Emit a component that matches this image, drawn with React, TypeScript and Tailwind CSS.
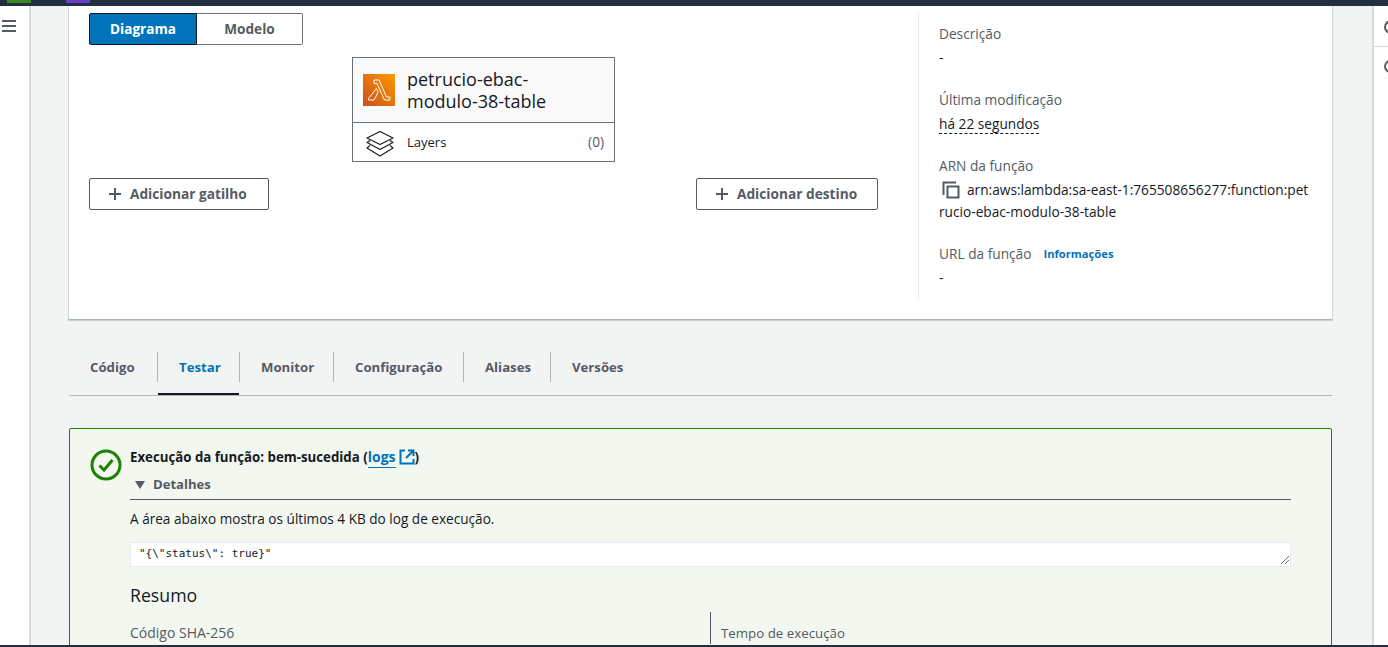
import React from "react";

const font = "font-['Open_Sans','Noto_Sans',sans-serif]";

const PlusIcon = () => (
  <svg width="16" height="16" viewBox="0 0 16 16" className="text-[#545b64]">
    <path d="M2 8h12M8 2v12" stroke="currentColor" strokeWidth="2" fill="none" />
  </svg>
);

const LambdaIcon = () => (
  <svg width="32" height="32" viewBox="0 0 32 32" className="shrink-0">
    <defs>
      <linearGradient id="lambdaBg" x1="0" y1="1" x2="1" y2="0">
        <stop offset="0" stopColor="#c8511b" />
        <stop offset="1" stopColor="#ff9900" />
      </linearGradient>
    </defs>
    <rect width="32" height="32" fill="url(#lambdaBg)" />
    <path
      d="M11 6h5l7.5 17H27v3h-5.5L14 9.5h-3zM13.5 14.5l1.7 3.6L11 26H5.5v-1.5z"
      fill="none"
      stroke="#fff"
      strokeWidth="1"
      strokeLinejoin="round"
    />
  </svg>
);

const LayersIcon = () => (
  <svg width="30" height="26" viewBox="0 0 30 26" className="mt-[3px] shrink-0 text-[#16191f]">
    <g fill="none" stroke="currentColor" strokeWidth="1.1" strokeLinejoin="round">
      <path d="M15 .5 28 7 15 13.5 2 7z" />
      <path d="M5 9.5 2 11.5 15 18.5 28 11.5 25 9.5" />
      <path d="M5 14.5 2 17 15 25 28 17 25 14.5" />
    </g>
  </svg>
);

const CopyIcon = () => (
  <svg width="18" height="18" viewBox="0 0 18 18" className="shrink-0 text-[#545b64]">
    <path
      d="M1.5 14V1.5H14M5.5 5.5H16.5V16.5H5.5z"
      fill="none"
      stroke="currentColor"
      strokeWidth="2"
    />
  </svg>
);

const Field = ({
  label,
  info,
  children,
}: {
  label: string;
  info?: boolean;
  children: React.ReactNode;
}) => (
  <div className="mb-[20px] text-[13.7px] leading-[22px]">
    <div className="mb-[2px] flex items-center gap-3 text-[#545b64]">
      {label}
      {info && (
        <span className="text-[11.2px] font-bold text-[#0073bb]">Informações</span>
      )}
    </div>
    <div className="text-[#16191f]">{children}</div>
  </div>
);

const tabs = [
  { name: "Código", width: "w-[88px]" },
  { name: "Testar", width: "w-[82px]" },
  { name: "Monitor", width: "w-[94px]" },
  { name: "Configuração", width: "w-[130px]" },
  { name: "Aliases", width: "w-[87px]" },
  { name: "Versões", width: "w-[94px]" },
];

export default function App() {
  return (
    <div className={`${font} flex h-[647px] w-[1388px] flex-col overflow-hidden bg-[#f2f3f3] text-[13.7px] text-[#16191f]`}>
      {/* faixa superior */}
      <div className="flex h-[6px] shrink-0 bg-[#232f3e]">
        <div className="ml-[7px] h-[3px] w-6 bg-[#3f8624]" />
        <div className="ml-[35px] h-[3px] w-6 bg-[#693cc5]" />
      </div>

      <div className="flex min-h-0 flex-1">
        <div className="w-[31px] shrink-0 border-r-2 border-[#d5dbdb] bg-white pl-[2px] pt-[14px]">
          <svg width="14" height="12" viewBox="0 0 14 12" className="text-[#545b64]">
            <path d="M0 1h14M0 6h14M0 11h14" stroke="currentColor" strokeWidth="2" />
          </svg>
        </div>

        <main className="w-[1341px] shrink-0 pl-[37px]">
          {/* painel da função */}
          <section className="flex h-[314px] w-[1265px] border-x border-b border-x-[#d5dbdb] border-b-[#aab7b8] bg-white shadow-[0_1px_1px_0_rgba(0,28,36,0.15)]">
            <div className="w-[849px] shrink-0 pl-5 pr-10 pt-[7px]">
              <div className="flex h-8 w-[214px] text-[13.6px] font-bold leading-none">
                <div className="flex w-[108px] items-center justify-center rounded-l-[2px] border border-[#16191f] bg-[#0073bb] text-white">
                  Diagrama
                </div>
                <div className="flex flex-1 items-center justify-center rounded-r-[2px] border border-l-0 border-[#687078] text-[#545b64]">
                  Modelo
                </div>
              </div>

              <div className="ml-[263px] mt-3 w-[263px] border border-[#687078]">
                <div className="flex h-[65px] items-center gap-3 border-b border-[#687078] bg-[#fafafa] px-[10px]">
                  <LambdaIcon />
                  <div className="text-[18px] leading-[22px]">
                    petrucio-ebac-
                    <br />
                    modulo-38-table
                  </div>
                </div>
                <div className="flex h-[38px] items-center pl-3 pr-[10px] text-[13px]">
                  <LayersIcon />
                  <span className="ml-[12px] flex-1 pt-[1px]">Layers</span>
                  <span className="pt-[1px] text-[13.7px] text-[#545b64]">(0)</span>
                </div>
              </div>

              <div className="mt-4 flex justify-between text-[13.7px]">
                <button className="flex h-8 w-[180px] items-center gap-[7px] rounded-[2px] border border-[#545b64] pl-[17px] font-bold text-[#545b64]">
                  <PlusIcon />
                  Adicionar gatilho
                </button>
                <button className="flex h-8 w-[182px] items-center gap-[7px] rounded-[2px] border border-[#545b64] pl-[17px] font-bold text-[#545b64]">
                  <PlusIcon />
                  Adicionar destino
                </button>
              </div>
            </div>

            <div className="mt-[7px] h-[285px] flex-1 border-l border-[#eaeded] pl-5 pr-5 pt-[10px]">
              <Field label="Descrição">-</Field>
              <Field label="Última modificação">
                <span className="border-b border-dashed border-[#16191f]">há 22 segundos</span>
              </Field>
              <Field label="ARN da função">
                <div className="break-all">
                  <span className="mr-[7px] ml-[3px] inline-block align-[-4px]">
                    <CopyIcon />
                  </span>
                  arn:aws:lambda:sa-east-1:765508656277:function:petrucio-ebac-modulo-38-table
                </div>
              </Field>
              <Field label="URL da função" info>
                -
              </Field>
            </div>
          </section>

          {/* abas */}
          <nav className="ml-[1px] mt-[32px] flex h-[44px] w-[1263px] items-start border-b border-[#aab7b8] text-[13.2px] font-bold text-[#545b64]">
            {tabs.map((tab, i) => (
              <div
                key={tab.name}
                className={`relative flex h-[30px] items-center pl-[21px] pt-[1px] ${tab.width} ${
                  i > 0 ? "border-l border-[#aab7b8]" : ""
                } ${i === 1 ? "text-[#0073bb]" : ""}`}
              >
                {tab.name}
                {i === 1 && (
                  <div className="absolute bottom-[-13px] left-0 right-0 h-[2px] bg-[#16191f]" />
                )}
              </div>
            ))}
          </nav>

          {/* resultado */}
          <section className="ml-[1px] mt-8 h-[300px] w-[1263px] rounded-[2px] border border-[#1d8102] bg-[#f2f8f0] pl-[20px] pr-10 pt-[18px]">
            <div className="flex">
              <svg width="32" height="32" viewBox="0 0 32 32" className="mt-[2px] shrink-0 text-[#1d8102]">
                <circle cx="16" cy="16" r="14" fill="none" stroke="currentColor" strokeWidth="3" />
                <path d="M9.5 16.5 14 21l8.5-10" fill="none" stroke="currentColor" strokeWidth="3" />
              </svg>
              <div className="ml-[8px] flex-1">
                <div className="flex h-5 items-center text-[13.25px] font-bold leading-5">
                  Execução da função: bem-sucedida (
                  <span className="border-b border-[#0073bb] text-[14px] text-[#0073bb]">logs</span>
                  <svg width="16" height="16" viewBox="0 0 16 16" className="ml-[3px] text-[#0073bb]">
                    <path
                      d="M6 1.5H1.5v13h13V10M9 1.5h5.5V7M14.5 1.5 7 9"
                      fill="none"
                      stroke="currentColor"
                      strokeWidth="2"
                    />
                  </svg>
                  )
                </div>
                <div className="mt-[6px] flex h-[27px] items-center border-b border-[#545b64] pb-[3px] text-[13.1px] font-bold text-[#545b64]">
                  <svg width="12" height="10" viewBox="0 0 12 10" className="ml-[4px] mr-[7px]">
                    <path d="M1 1h10L6 9z" fill="currentColor" />
                  </svg>
                  Detalhes
                </div>
                <p className="mt-[8px] text-[13.6px] leading-[22px]">
                  A área abaixo mostra os últimos 4 KB do log de execução.
                </p>
                <div className="relative mt-[12px] h-[25px] border border-[#eaeded] bg-white pl-[8px] font-['DejaVu_Sans_Mono',monospace] text-[11px] leading-[21px]">
                  {'"{\\"status\\": true}"'}
                  <svg width="10" height="10" viewBox="0 0 10 10" className="absolute bottom-[1px] right-0 text-[#687078]">
                    <path d="M1 9 9 1M5 9 9 5" stroke="currentColor" strokeWidth="1" />
                  </svg>
                </div>
                <h2 className="mt-[17px] text-[17.7px] leading-[22px]">Resumo</h2>
                <div className="mt-[6px] grid grid-cols-[580px_1fr]">
                  <div className="pt-[10px] text-[14px] leading-[22px] text-[#545b64]">Código SHA-256</div>
                  <div className="border-l border-[#545b64] pl-[10px] pt-[10px] text-[13.3px] leading-[22px] text-[#545b64]">
                    Tempo de execução
                  </div>
                </div>
              </div>
            </div>
          </section>
        </main>

        <aside className="flex-1 border-l-2 border-[#d5dbdb] bg-white">
          <div className="h-[41px] border-b border-[#d5dbdb] pl-[10px] pt-[14px]">
            <div className="h-[14px] w-2 rounded-l-full border-2 border-r-0 border-[#545b64]" />
          </div>
          <div className="ml-[10px] mt-[13px] h-[13px] w-2 rounded-l-full border-2 border-r-0 border-[#545b64]" />
        </aside>
      </div>

      {/* faixa inferior */}
      <div className="h-[2px] shrink-0 bg-[#232f3e]" />
    </div>
  );
}
